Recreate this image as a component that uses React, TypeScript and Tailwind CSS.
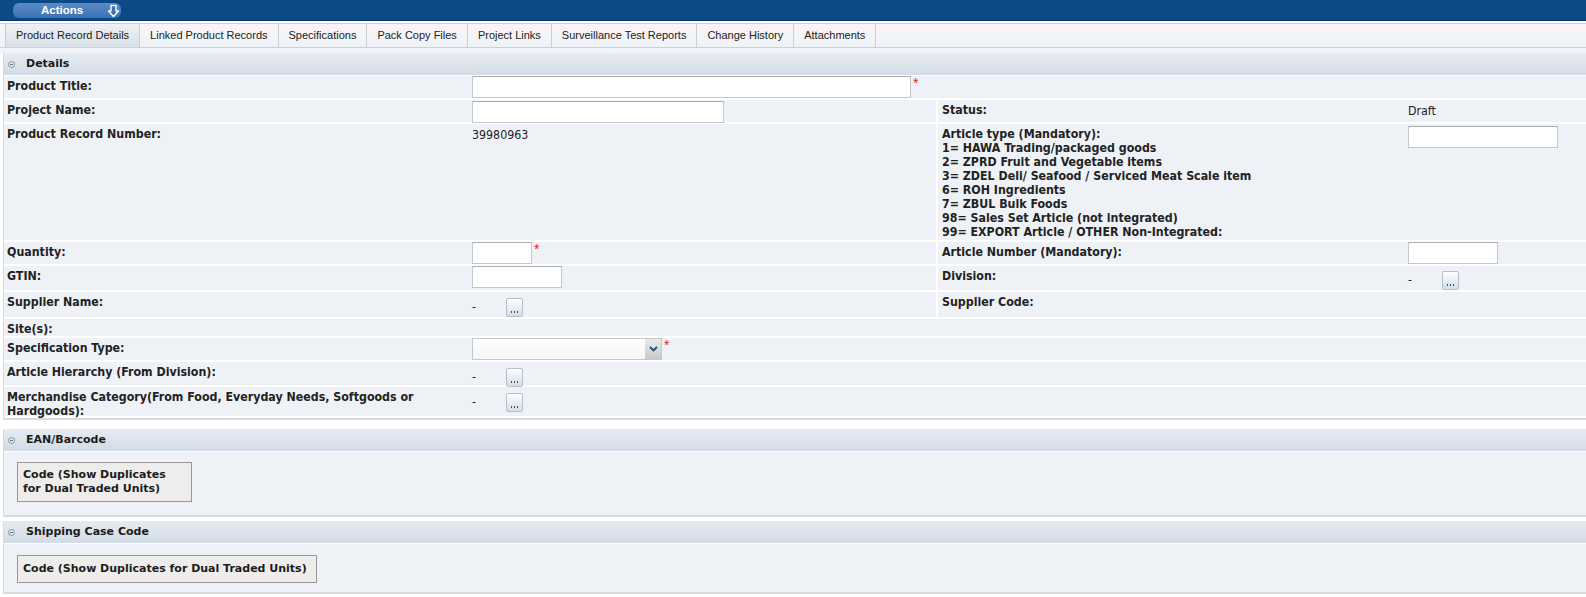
import React from 'react';

const LBL = "font-['DejaVu_Sans_Condensed','DejaVu_Sans',sans-serif] font-bold text-[12.3px] text-[#222]";
const VAL = "font-['DejaVu_Sans_Condensed','DejaVu_Sans',sans-serif] text-[12.3px] text-[#222]";

const tabs = [
  'Product Record Details',
  'Linked Product Records',
  'Specifications',
  'Pack Copy Files',
  'Project Links',
  'Surveillance Test Reports',
  'Change History',
  'Attachments',
];

const articleTypes = [
  '1= HAWA Trading/packaged goods',
  '2= ZPRD Fruit and Vegetable items',
  '3= ZDEL Deli/ Seafood / Serviced Meat Scale item',
  '6= ROH Ingredients',
  '7= ZBUL Bulk Foods',
  '98= Sales Set Article (not integrated)',
  '99= EXPORT Article / OTHER Non-Integrated:',
];

function TextBox({ w, req }: { w: string; req?: boolean }) {
  return (
    <div className="flex items-start">
      <div className={`${w} h-[22px] bg-white border border-[#c4c8cc] border-t-[#a9adb2]`} />
      {req && <span className="text-[#e02020] text-[10px] leading-none ml-[2px] mt-[1px]">*</span>}
    </div>
  );
}

function Lookup() {
  return (
    <div className="flex items-start">
      <span className={`${VAL} w-[34px] pt-[6px]`}>-</span>
      <div className="w-[17px] h-[19px] mt-[6px] rounded-[2px] border border-[#b4c0cc] bg-gradient-to-b from-white to-[#d4dde6] flex items-end justify-center pb-[3px]">
        <span className="block w-[9px] h-[2px] bg-[radial-gradient(circle,#30507a_0.6px,transparent_0.9px)] bg-[length:3px_2px]" />
      </div>
    </div>
  );
}

function Row({
  label,
  value,
  label2,
  value2,
  h,
  split = true,
}: {
  label: React.ReactNode;
  value?: React.ReactNode;
  label2?: React.ReactNode;
  value2?: React.ReactNode;
  h: string;
  split?: boolean;
}) {
  return (
    <div className={`flex ${h} border-b-2 border-white`}>
      <div className={`${LBL} w-[468px] shrink-0 pl-[3px] pt-[3px] leading-[14px]`}>{label}</div>
      <div className={`w-[466px] shrink-0 ${split ? 'border-r-2 border-white' : ''}`}>{value}</div>
      {split && (
        <>
          <div className={`${LBL} w-[470px] shrink-0 pl-[4px] pt-[3px] leading-[14px]`}>{label2}</div>
          <div className="flex-1">{value2}</div>
        </>
      )}
    </div>
  );
}

function SectionHead({ title }: { title: string }) {
  return (
    <div className="h-[23px] flex items-center bg-gradient-to-b from-[#e6ebf1] to-[#d2dce6] border-b border-white">
      <span className="w-[7px] h-[7px] ml-[4px] rounded-full border border-[#8a97a5] flex items-center justify-center">
        <span className="block w-[3px] h-px bg-[#6a7785]" />
      </span>
      <span className="ml-[11px] font-['DejaVu_Sans',sans-serif] font-bold text-[11px] text-[#1c1c1c]">{title}</span>
    </div>
  );
}

function CodeBtn({ children, w, cls }: { children: React.ReactNode; w: string; cls: string }) {
  return (
    <div className={`${w} ${cls} border border-[#979797] bg-[#efedeb] px-[5px] font-['DejaVu_Sans',sans-serif] font-bold text-[11px] text-[#1c1c1c]`}>
      {children}
    </div>
  );
}

export default function App() {
  return (
    <div className="w-[1586px] h-[597px] bg-white overflow-hidden">
      {/* top action bar */}
      <div className="h-[21px] bg-[#0b4a86] border-b border-[#073a6c] flex items-center">
        <div className="ml-[13px] w-[108px] h-[15px] mt-[1px] rounded-[6px] bg-gradient-to-b from-[#5b8cc8] to-[#3c70b2] flex items-center">
          <span className="ml-[28px] font-['Liberation_Sans',sans-serif] font-bold text-[11.5px] text-white">Actions</span>
          <svg className="ml-[24px]" width="13" height="14" viewBox="0 0 13 14">
            <path d="M4 1.5h5v5.5h2.5L6.5 12.5 1.5 7H4z" fill="#3c70b2" stroke="white" strokeWidth="1.4" strokeLinejoin="round" />
          </svg>
        </div>
      </div>

      {/* tabs */}
      <div className="mt-[2px] h-[25px] flex border-y border-[#c6d2de] bg-gradient-to-b from-[#fbf3f3] via-[#f3f5f8] to-[#eef2f7]">
        <div className="w-[5px]" />
        {tabs.map((t, i) => (
          <div
            key={t}
            className={`px-[10px] flex items-center border-r border-[#c7d0da] font-['Liberation_Sans',sans-serif] text-[11px] text-[#222] ${
              i === 0 ? 'bg-gradient-to-b from-[#eef1f5] to-[#d9e0e8] border-l' : ''
            }`}
          >
            {t}
          </div>
        ))}
      </div>

      <div className="h-[5px] bg-[#f0f4f8]" />

      {/* Details section */}
      <div className="ml-[3px] border-l border-b-2 border-[#d4dbe2]">
        <SectionHead title="Details" />
        <div className="bg-[#eef2f6]">
          <Row h="h-[24px]" label="Product Title:" value={<TextBox w="w-[439px]" req />} split={false} />
          <Row
            h="h-[24px]"
            label="Project Name:"
            value={<div className="pt-[1px]"><TextBox w="w-[252px]" /></div>}
            label2="Status:"
            value2={<div className={`${VAL} pt-[2px]`}>Draft</div>}
          />
          <Row
            h="h-[118px]"
            label="Product Record Number:"
            value={<div className={`${VAL} pt-[2px]`}>39980963</div>}
            label2={
              <div className="leading-[14px]">
                <div>Article type (Mandatory):</div>
                {articleTypes.map((a) => (
                  <div key={a}>{a}</div>
                ))}
              </div>
            }
            value2={<div className="pt-[2px]"><TextBox w="w-[150px]" /></div>}
          />
          <Row
            h="h-[24px]"
            label="Quantity:"
            value={<TextBox w="w-[60px]" req />}
            label2="Article Number (Mandatory):"
            value2={<TextBox w="w-[90px]" />}
          />
          <Row
            h="h-[26px]"
            label="GTIN:"
            value={<TextBox w="w-[90px]" />}
            label2="Division:"
            value2={<div className="-mt-[1px]"><Lookup /></div>}
          />
          <Row h="h-[27px]" label="Supplier Name:" value={<Lookup />} label2="Supplier Code:" />
          <Row h="h-[19px]" label="Site(s):" split={false} />
          <Row
            h="h-[24px]"
            label="Specification Type:"
            value={
              <div className="flex items-start">
                <div className="w-[190px] h-[22px] bg-gradient-to-b from-white to-[#f6f6f6] border border-[#c4c8cc] flex justify-end">
                  <div className="w-[16px] h-full bg-gradient-to-b from-[#eaeaea] to-[#c8c8c8] flex items-center justify-center">
                    <svg width="9" height="6" viewBox="0 0 9 6">
                      <path d="M1 1l3.5 3.5L8 1" fill="none" stroke="#2b4a70" strokeWidth="1.8" />
                    </svg>
                  </div>
                </div>
                <span className="text-[#e02020] text-[10px] leading-none ml-[2px] mt-[1px]">*</span>
              </div>
            }
            split={false}
          />
          <Row h="h-[25px]" label="Article Hierarchy (From Division):" value={<Lookup />} split={false} />
          <Row
            h="h-[31px]"
            label={
              <>
                Merchandise Category(From Food, Everyday Needs, Softgoods or
                <br />
                Hardgoods):
              </>
            }
            value={<Lookup />}
            split={false}
          />
        </div>
      </div>

      <div className="h-[9px]" />

      {/* EAN section */}
      <div className="ml-[3px] border-l border-b-2 border-[#d4dbe2]">
        <SectionHead title="EAN/Barcode" />
        <div className="bg-[#eef2f6] h-[63px] pl-[13px] pt-[10px]">
          <CodeBtn w="w-[175px]" cls="py-[5px] leading-[14px]">
            Code (Show Duplicates
            <br />
            for Dual Traded Units)
          </CodeBtn>
        </div>
      </div>

      <div className="h-[4px]" />

      {/* Shipping case section */}
      <div className="ml-[3px] border-l border-b-2 border-[#d4dbe2]">
        <SectionHead title="Shipping Case Code" />
        <div className="bg-[#eef2f6] h-[48px] pl-[13px] pt-[11px]">
          <CodeBtn w="w-[300px]" cls="py-[6px] leading-[14px]">Code (Show Duplicates for Dual Traded Units)</CodeBtn>
        </div>
      </div>
    </div>
  );
}
